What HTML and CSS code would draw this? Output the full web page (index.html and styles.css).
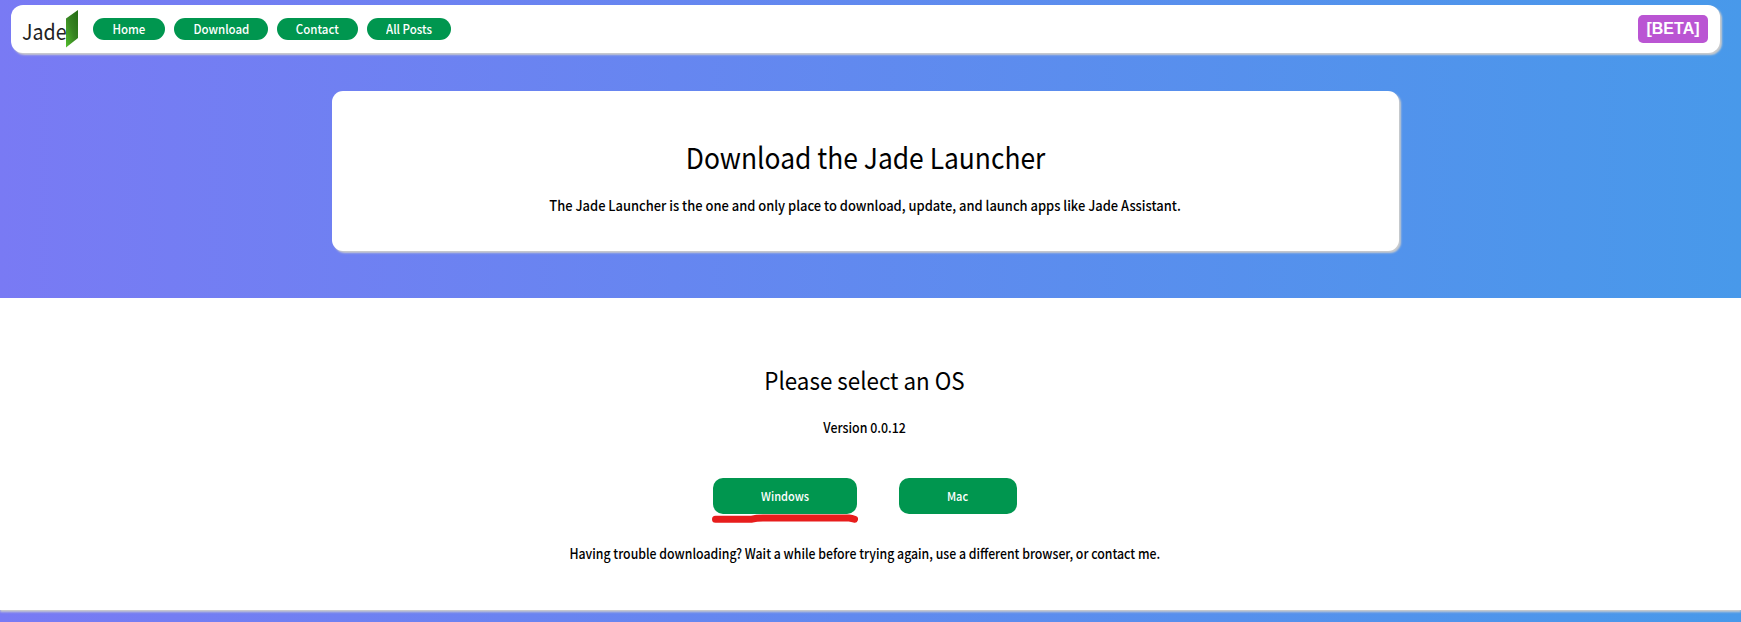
FILE: index.html
```
<!DOCTYPE html>
<html lang="en">
<head>
<meta charset="utf-8">
<title>Jade Launcher</title>
<link rel="stylesheet" href="styles.css">
</head>
<body>
<div class="page">
  <header class="hero">
    <nav class="nav">
      <a class="logo" href="#"><span class="logo-text">Jade</span><svg class="logo-mark" width="12" height="38" viewBox="0 0 12 38"><defs><linearGradient id="leaf" x1="1" y1="0" x2="0" y2="1"><stop offset="0" stop-color="#246c14"/><stop offset=".5" stop-color="#378323"/><stop offset="1" stop-color="#52bd2b"/></linearGradient></defs><path d="M0 8.5 12 0V28L0 37.5Z" fill="url(#leaf)"/></svg></a>
      <a class="pill home" href="#"><span>Home</span></a>
      <a class="pill download" href="#"><span>Download</span></a>
      <a class="pill contact" href="#"><span>Contact</span></a>
      <a class="pill posts" href="#"><span>All Posts</span></a>
      <span class="beta">[BETA]</span>
    </nav>
    <section class="card">
      <h1 class="title">Download the Jade Launcher</h1>
      <p class="text intro">The Jade Launcher is the one and only place to download, update, and launch apps like Jade Assistant.</p>
    </section>
  </header>
  <main class="main">
    <h2 class="subtitle">Please select an OS</h2>
    <p class="text version">Version 0.0.12</p>
    <div class="buttons">
      <a class="button windows" href="#"><span>Windows</span><svg class="underline" width="146" height="9" viewBox="0 0 146 9"><path d="M3.5 5.2H40Q44 4 51 4H137Q140 4.3 142.500 5.200" fill="none" stroke="#e71d1c" stroke-width="7" stroke-linecap="round" stroke-linejoin="round"/></svg></a>
      <a class="button mac" href="#"><span>Mac</span></a>
    </div>
    <p class="text help">Having trouble downloading? Wait a while before trying again, use a different browser, or contact me.</p>
  </main>
</div>
</body>
</html>
```
FILE: styles.css
```
* { box-sizing: border-box; }
body {
  margin: 0;
  height: 622px;
  overflow: hidden;
  font-family: "Noto Sans CJK SC", "Noto Sans", sans-serif;
  color: #000;
}
a { color: inherit; text-decoration: none; }
h1, h2, p { margin: 0; font-weight: 400; white-space: nowrap; }
.page {
  height: 622px;
  background: linear-gradient(90deg, #797af4, #4899ea);
}
.hero { height: 298px; padding: 5px 21px 0 11px; }
.nav {
  height: 48px;
  display: flex;
  align-items: flex-start;
  padding: 0 11px;
  background: #fff;
  border-radius: 12px;
  box-shadow: 2px 2px 2px #ccc;
}
.logo { display: flex; width: 56px; margin: 5px 15px 0 0; }
.logo-text {
  width: 44px;
  font-size: 22px;
  line-height: 40px;
  color: #222;
  transform: scaleX(.89);
  transform-origin: left;
}
.logo-mark { flex: none; }
.pill {
  height: 22px;
  margin: 13px 9px 0 0;
  padding-bottom: 2px;
  display: flex;
  justify-content: center;
  align-items: center;
  border-radius: 11px;
  background: #00964f;
  color: #fff;
  font-size: 12.5px;
  font-weight: 500;
}
.pill span, .button span { transform: scaleX(.92); }
.home { width: 72px; }
.download { width: 94px; }
.contact { width: 81px; }
.posts { width: 84px; }
.beta {
  width: 70px;
  height: 28px;
  margin: 10px 1px 0 auto;
  border-radius: 5px;
  background: #ba55d3;
  color: #fff;
  font: bold 16px/27px "Liberation Sans", sans-serif;
  text-align: center;
}
.card {
  width: 1067px;
  height: 160px;
  margin: 38px 0 0 321px;
  display: flex;
  flex-direction: column;
  align-items: center;
  background: #fff;
  border-radius: 11px;
  box-shadow: 2px 2px 2px #ccc;
}
.title { margin-top: 44px; font-size: 29px; line-height: 42px; transform: scaleX(.91); }
.text { font-size: 14px; line-height: 20px; font-weight: 500; }
.intro { margin-top: 18px; transform: scaleX(.923); }
.main {
  height: 312px;
  padding: 64px 11px 0 0;
  display: flex;
  flex-direction: column;
  align-items: center;
  background: #fff;
  box-shadow: 0 2px 2px #ccc;
}
.subtitle { font-size: 24px; line-height: 36px; transform: scaleX(.932); }
.version { margin-top: 19px; transform: scaleX(.885); }
.buttons { display: flex; gap: 42px; margin-top: 41px; }
.button {
  position: relative;
  height: 36px;
  padding-bottom: 2px;
  display: flex;
  justify-content: center;
  align-items: center;
  border-radius: 10px;
  background: #00964f;
  color: #fff;
  font-size: 12px;
  font-weight: 500;
}
.windows { width: 144px; }
.mac { width: 118px; }
.underline { position: absolute; left: -1px; top: 36px; }
.help { margin-top: 29px; transform: scaleX(.877); }
```
